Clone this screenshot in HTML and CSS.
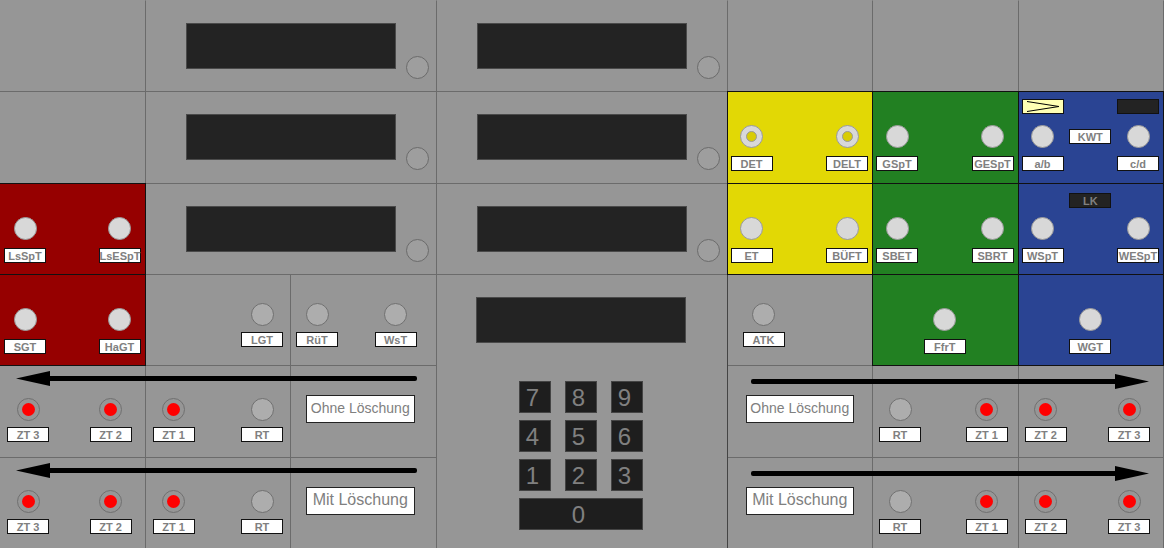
FILE: index.html
```
<!DOCTYPE html>
<html lang="de">
<head>
	<meta charset="UTF-8">
	<title>Stelltisch</title>
	<link rel="stylesheet" href="styles.css">
</head>
<body>
<div id="panel">
	<!-- Reihe 1 -->
	<div class="cell first"></div>
	<div class="cell first wide meter"><div class="display"></div><button class="key dim" aria-label="Anzeige 1"></button></div>
	<div class="cell first wide meter"><div class="display"></div><button class="key dim" aria-label="Anzeige 2"></button></div>
	<div class="cell first"></div>
	<div class="cell first"></div>
	<div class="cell first"></div>

	<!-- Reihe 2 -->
	<div class="cell"></div>
	<div class="cell wide meter"><div class="display"></div><button class="key dim" aria-label="Anzeige 3"></button></div>
	<div class="cell wide meter"><div class="display"></div><button class="key dim" aria-label="Anzeige 4"></button></div>
	<div class="cell color yellow">
		<div class="unit"><button class="key ring" id="det"></button><label class="tag" for="det">DET</label></div>
		<div class="unit"><button class="key ring" id="delt"></button><label class="tag" for="delt">DELT</label></div>
	</div>
	<div class="cell color green">
		<div class="unit"><button class="key" id="gspt"></button><label class="tag" for="gspt">GSpT</label></div>
		<div class="unit"><button class="key" id="gespt"></button><label class="tag" for="gespt">GESpT</label></div>
	</div>
	<div class="cell color blue lamps">
		<div class="unit">
			<div class="tag lamp"><svg width="34" height="11" viewBox="0 0 34 11"><path d="M1 0.5L33 5.5L1 10.5" fill="none" stroke="#000"/></svg></div>
			<button class="key" id="ab"></button><label class="tag" for="ab">a/b</label>
		</div>
		<div class="tag kwt">KWT</div>
		<div class="unit">
			<div class="tag dark"></div>
			<button class="key" id="cd"></button><label class="tag" for="cd">c/d</label>
		</div>
	</div>

	<!-- Reihe 3 -->
	<div class="cell color red">
		<div class="unit"><button class="key" id="lsspt"></button><label class="tag" for="lsspt">LsSpT</label></div>
		<div class="unit"><button class="key" id="lsespt"></button><label class="tag" for="lsespt">LsESpT</label></div>
	</div>
	<div class="cell wide meter"><div class="display"></div><button class="key dim" aria-label="Anzeige 5"></button></div>
	<div class="cell wide meter"><div class="display"></div><button class="key dim" aria-label="Anzeige 6"></button></div>
	<div class="cell color yellow">
		<div class="unit"><button class="key" id="et"></button><label class="tag" for="et">ET</label></div>
		<div class="unit"><button class="key" id="bueft"></button><label class="tag" for="bueft">BÜFT</label></div>
	</div>
	<div class="cell color green">
		<div class="unit"><button class="key" id="sbet"></button><label class="tag" for="sbet">SBET</label></div>
		<div class="unit"><button class="key" id="sbrt"></button><label class="tag" for="sbrt">SBRT</label></div>
	</div>
	<div class="cell color blue">
		<div class="unit"><button class="key" id="wspt"></button><label class="tag" for="wspt">WSpT</label></div>
		<div class="tag dark lk">LK</div>
		<div class="unit"><button class="key" id="wespt"></button><label class="tag" for="wespt">WESpT</label></div>
	</div>

	<!-- Reihe 4 -->
	<div class="cell color red">
		<div class="unit"><button class="key" id="sgt"></button><label class="tag" for="sgt">SGT</label></div>
		<div class="unit"><button class="key" id="hagt"></button><label class="tag" for="hagt">HaGT</label></div>
	</div>
	<div class="cell plain end">
		<div class="unit"><button class="key" id="lgt"></button><label class="tag" for="lgt">LGT</label></div>
	</div>
	<div class="cell plain">
		<div class="unit"><button class="key" id="ruet"></button><label class="tag" for="ruet">RüT</label></div>
		<div class="unit"><button class="key" id="wst"></button><label class="tag" for="wst">WsT</label></div>
	</div>
	<div class="cell center">
		<div class="display"></div>
		<div class="keypad">
			<button>7</button><button>8</button><button>9</button>
			<button>4</button><button>5</button><button>6</button>
			<button>1</button><button>2</button><button>3</button>
			<button class="zero">0</button>
		</div>
	</div>
	<div class="cell plain start">
		<div class="unit"><button class="key" id="atk"></button><label class="tag" for="atk">ATK</label></div>
	</div>
	<div class="cell color green middle">
		<div class="unit"><button class="key" id="ffrt"></button><label class="tag" for="ffrt">FfrT</label></div>
	</div>
	<div class="cell color blue middle">
		<div class="unit"><button class="key" id="wgt"></button><label class="tag" for="wgt">WGT</label></div>
	</div>

	<!-- Reihe 5 -->
	<div class="cell plain outer-left row5">
		<div class="unit"><button class="key red-dot" id="l1zt3"></button><label class="tag" for="l1zt3">ZT 3</label></div>
		<div class="unit"><button class="key red-dot" id="l1zt2"></button><label class="tag" for="l1zt2">ZT 2</label></div>
	</div>
	<div class="cell plain inner-left row5">
		<div class="unit"><button class="key red-dot" id="l1zt1"></button><label class="tag" for="l1zt1">ZT 1</label></div>
		<div class="unit"><button class="key" id="l1rt"></button><label class="tag" for="l1rt">RT</label></div>
	</div>
	<div class="cell sign-left row5"><div class="sign">Ohne Löschung</div></div>
	<div class="cell sign-right row5"><div class="sign">Ohne Löschung</div></div>
	<div class="cell plain inner-right row5">
		<div class="unit"><button class="key" id="r1rt"></button><label class="tag" for="r1rt">RT</label></div>
		<div class="unit"><button class="key red-dot" id="r1zt1"></button><label class="tag" for="r1zt1">ZT 1</label></div>
	</div>
	<div class="cell plain outer-right row5">
		<div class="unit"><button class="key red-dot" id="r1zt2"></button><label class="tag" for="r1zt2">ZT 2</label></div>
		<div class="unit"><button class="key red-dot" id="r1zt3"></button><label class="tag" for="r1zt3">ZT 3</label></div>
	</div>

	<!-- Reihe 6 -->
	<div class="cell plain outer-left row6">
		<div class="unit"><button class="key red-dot" id="l2zt3"></button><label class="tag" for="l2zt3">ZT 3</label></div>
		<div class="unit"><button class="key red-dot" id="l2zt2"></button><label class="tag" for="l2zt2">ZT 2</label></div>
	</div>
	<div class="cell plain inner-left row6">
		<div class="unit"><button class="key red-dot" id="l2zt1"></button><label class="tag" for="l2zt1">ZT 1</label></div>
		<div class="unit"><button class="key" id="l2rt"></button><label class="tag" for="l2rt">RT</label></div>
	</div>
	<div class="cell sign-left row6"><div class="sign big">Mit Löschung</div></div>
	<div class="cell sign-right row6"><div class="sign big">Mit Löschung</div></div>
	<div class="cell plain inner-right row6">
		<div class="unit"><button class="key" id="r2rt"></button><label class="tag" for="r2rt">RT</label></div>
		<div class="unit"><button class="key red-dot" id="r2zt1"></button><label class="tag" for="r2zt1">ZT 1</label></div>
	</div>
	<div class="cell plain outer-right row6">
		<div class="unit"><button class="key red-dot" id="r2zt2"></button><label class="tag" for="r2zt2">ZT 2</label></div>
		<div class="unit"><button class="key red-dot" id="r2zt3"></button><label class="tag" for="r2zt3">ZT 3</label></div>
	</div>

	<!-- Richtungspfeile -->
	<div class="arrow to-left row5"><svg width="34" height="15" viewBox="0 0 34 15"><path d="M0 7.5L34 0V15Z"/></svg><i></i></div>
	<div class="arrow to-left row6"><svg width="34" height="15" viewBox="0 0 34 15"><path d="M0 7.5L34 0V15Z"/></svg><i></i></div>
	<div class="arrow to-right row5"><i></i><svg width="34" height="15" viewBox="0 0 34 15"><path d="M34 7.5L0 0V15Z"/></svg></div>
	<div class="arrow to-right row6"><i></i><svg width="34" height="15" viewBox="0 0 34 15"><path d="M34 7.5L0 0V15Z"/></svg></div>
</div>
</body>
</html>
```
FILE: styles.css
```
*{box-sizing:border-box}
body{margin:0;background:#969696;font-family:"Liberation Sans",Arial,sans-serif;color:#808080;}
button{margin:0;padding:0;font-family:inherit;color:inherit;cursor:pointer;}

#panel{display:grid;grid-template-columns:repeat(8,minmax(0,1fr));grid-template-rows:repeat(6,minmax(91px,1fr));min-height:100vh;}
.cell{display:flex;justify-content:space-between;align-items:flex-start;border-right:1px solid #6b6b6b;border-top:1px solid #6b6b6b;}
.first{border-top-color:transparent;}
.wide{grid-column:span 2;}

/* farbige Felder */
.color{z-index:1;margin:0 0 -1px -1px;padding:33px 4px 0 3px;border:1px solid #111;}
.red{padding-left:4px;background:#960000;}
.yellow{background:#e2d805;}
.green{background:#228022;}
.blue{background:#2a4493;}
.middle{justify-content:center;}
.lamps{padding-top:7px;}

/* Tasten mit Schild */
.unit{display:flex;flex-direction:column;align-items:center;gap:8px;}
.key{display:flex;align-items:center;justify-content:center;width:23px;height:23px;border:1px solid #999;border-radius:50%;background:#d8d8d8;}
.ring:before,.red-dot:before{content:'';border-radius:50%;}
.ring:before{width:9px;height:9px;border:1px solid #999;background:#d8cc05;}
.red-dot:before{width:13px;height:13px;background:#f00;}
.plain .key{background:#adadad;border-color:#707070;}
.plain .red-dot{background:#969696;}
.key.dim{background:#9e9e9e;border-color:#6b6b6b;}
.tag{display:block;width:42px;height:15px;border:1px solid #111;background:#fff;font-size:11px;font-weight:bold;line-height:14px;text-align:center;white-space:nowrap;}
.lamp{background:#ffffb4;line-height:0;padding-top:1px;}
.dark{background:#232323;}
.lamps .lamp,.lamps .dark{margin-bottom:3px;}
.kwt{margin-top:30px;}
.lk{margin-top:-24px;}

.plain{padding:28px 19px 0 5px;}
.plain .unit{gap:6px;}
.end{justify-content:flex-end;padding-right:7px;}
.start{justify-content:flex-start;padding-left:15px;}
.outer-left{grid-column:1;padding:32px 13px 0 7px;}
.inner-left{grid-column:2;padding:32px 7px 0 7px;}
.inner-right{grid-column:7;padding:32px 10px 0 6px;}
.outer-right{grid-column:8;padding:32px 13px 0 6px;}

.sign-left{grid-column:3;padding:29px 21px 0 15px;}
.sign-right{grid-column:6;padding:29px 18px 0;}
.sign{flex:1;height:28px;border:1px solid #222;background:#fff;font-size:14px;line-height:24px;text-align:center;white-space:nowrap;}
.big{font-size:16px;}

/* Anzeigen */
.display{flex:1;height:46px;border:1px solid #4a4a4a;background:#232323;}
.meter{gap:10px;padding:22px 7px 0 40px;}
.meter .key{margin-top:33px;}

.center{grid-row:4 / span 3;grid-column:4 / span 2;flex-direction:column;justify-content:flex-start;align-items:center;gap:38px;padding:22px 41px 0 39px;border-right-color:#444;}
.center .display{flex:none;width:100%;}
.keypad{display:grid;grid-template-columns:repeat(3,32px);gap:7px 14px;}
.keypad button{height:32px;padding:2px 4px 0 0;border:1px solid #444;background:#1e1e1e;font-size:24px;line-height:28px;}
.keypad .zero{grid-column:span 3;}

/* Pfeile liegen im Raster ueber den Feldern */
.arrow{display:flex;align-items:center;align-self:start;z-index:2;}
.arrow svg{display:block;fill:#000;}
.arrow i{flex:1;height:5px;background:#000;}
.to-left{grid-column:1 / span 3;margin:6px 20px 0 16px;}
.to-left i{border-radius:0 2px 2px 0;}
.to-right{grid-column:6 / span 3;margin:9px 15px 0 23px;}
.to-right i{border-radius:2px 0 0 2px;}
.row5{grid-row:5;}
.row6{grid-row:6;}
```
